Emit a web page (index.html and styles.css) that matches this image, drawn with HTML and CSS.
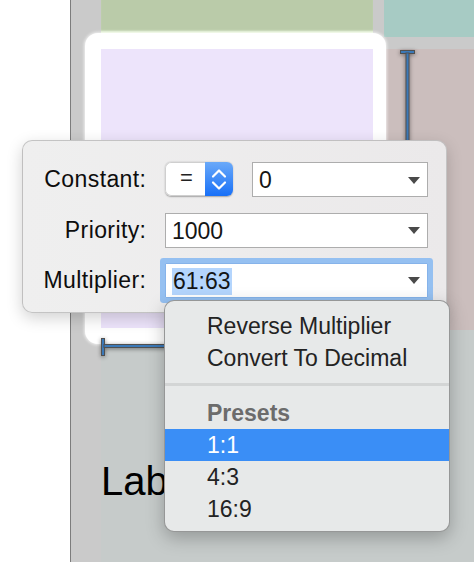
FILE: index.html
```html
<!DOCTYPE html>
<html>
<head>
<meta charset="utf-8">
<link rel="stylesheet" href="styles.css">
</head>
<body>
<div class="stage">
  <div class="canvas"></div>
  <div class="view green"></div>
  <div class="view teal"></div>
  <div class="view pink"></div>
  <div class="view bottom"></div>
  <div class="view frame"><div class="purple"></div></div>
  <div class="view label">Label</div>
  <svg class="ibeam-v" width="20" height="100" viewBox="0 0 20 100">
    <rect x="2.5" y="2.5" width="14" height="3" fill="#3b79b8" stroke="#505050" stroke-width="1"/>
    <rect x="8" y="5" width="3" height="95" fill="#3b79b8" stroke="#505050" stroke-width="1"/>
  </svg>
  <svg class="ibeam-h" width="80" height="22" viewBox="0 0 80 22">
    <rect x="2.5" y="2.5" width="3" height="17" fill="#3b79b8" stroke="#505050" stroke-width="1"/>
    <rect x="5" y="8.5" width="75" height="3" fill="#3b79b8" stroke="#505050" stroke-width="1"/>
  </svg>

  <div class="popover">
    <div class="lbl">Constant:</div>
    <div class="ctrl-row">
      <div class="stepper">
        <div class="seg-eq">=</div>
        <div class="seg-arrows">
          <svg width="28" height="33" viewBox="0 0 28 33">
            <path d="M8 13.5 L14 7.5 L20 13.5" fill="none" stroke="#fff" stroke-width="2.2" stroke-linecap="round" stroke-linejoin="round"/>
            <path d="M8 19.5 L14 25.5 L20 19.5" fill="none" stroke="#fff" stroke-width="2.2" stroke-linecap="round" stroke-linejoin="round"/>
          </svg>
        </div>
      </div>
      <div class="combo"><span class="val">0</span><span class="tri"></span></div>
    </div>
    <div class="lbl">Priority:</div>
    <div class="combo"><span class="val">1000</span><span class="tri"></span></div>
    <div class="lbl">Multiplier:</div>
    <div class="combo focus"><span class="val"><span class="sel">61:63</span></span><span class="tri"></span></div>
  </div>

  <div class="menu">
    <div class="item">Reverse Multiplier</div>
    <div class="item">Convert To Decimal</div>
    <div class="sep"></div>
    <div class="item head">Presets</div>
    <div class="item active">1:1</div>
    <div class="item">4:3</div>
    <div class="item">16:9</div>
  </div>
</div>
</body>
</html>
```

FILE: styles.css
```css
html, body {
  margin: 0;
  padding: 0;
  background: #ffffff;
}
body {
  font-family: "Liberation Sans", Arial, sans-serif;
  overflow: hidden;
}
.stage {
  position: relative;
  width: 474px;
  height: 562px;
  overflow: hidden;
}
.canvas {
  position: absolute;
  left: 70px;
  top: 0;
  right: 0;
  bottom: 0;
  background: #cacaca;
  border-left: 1px solid #7c7c7c;
}
.view {
  position: absolute;
}
.green {
  left: 101px;
  top: 0;
  width: 272px;
  height: 33px;
  background: #bacba9;
  box-shadow: inset 0 -3px 2px -1px #e3f2d3;
}
.teal {
  left: 384px;
  top: 0;
  width: 90px;
  height: 37px;
  background: #a7cbc4;
}
.pink {
  left: 385px;
  top: 49px;
  width: 89px;
  height: 281px;
  background: #cbbebd;
}
.bottom {
  left: 101px;
  top: 330px;
  width: 373px;
  height: 232px;
  background: #c6cbca;
}
.frame {
  left: 85px;
  top: 33px;
  width: 301px;
  height: 311px;
  box-sizing: border-box;
  padding: 16px 13px 16px 16px;
  background: #ffffff;
  border-radius: 13px;
  box-shadow: 0 0 3px 1px rgba(255, 255, 255, 0.7);
}
.purple {
  width: 100%;
  height: 100%;
  background: #ede4fb;
}
.label {
  left: 101px;
  top: 461px;
  font-size: 40px;
  line-height: 40px;
  color: #000;
}
.ibeam-v {
  position: absolute;
  left: 398px;
  top: 48px;
  filter: drop-shadow(0 1px 2px rgba(0, 0, 0, 0.45));
}
.ibeam-h {
  position: absolute;
  left: 99px;
  top: 336px;
  filter: drop-shadow(0 1px 2px rgba(0, 0, 0, 0.45));
}

.popover {
  position: absolute;
  left: 22px;
  top: 140px;
  width: 425px;
  height: 173px;
  box-sizing: border-box;
  padding: 21px 20px 0 20px;
  display: grid;
  grid-template-columns: 103px 263px;
  grid-auto-rows: 35px;
  column-gap: 19px;
  row-gap: 15.5px;
  background: linear-gradient(90deg, #efefef, #ebe9ea);
  border-radius: 10px;
  border: 0.5px solid rgba(0, 0, 0, 0.18);
  box-shadow: 0 5px 16px rgba(0, 0, 0, 0.18);
  font-size: 23px;
  color: #151515;
}
.lbl {
  display: flex;
  align-items: center;
  justify-content: flex-end;
  white-space: nowrap;
  letter-spacing: 0.4px;
  margin-right: -0.4px;
  color: #0d0d0d;
}
.ctrl-row {
  display: flex;
  gap: 19px;
  align-items: flex-start;
}
.stepper {
  display: flex;
  width: 68px;
  height: 34px;
  border-radius: 6px;
  overflow: hidden;
  box-shadow: 0 0.5px 1.5px rgba(0, 0, 0, 0.3);
  flex: none;
}
.seg-eq {
  width: 40px;
  display: flex;
  align-items: center;
  justify-content: center;
  background: #ffffff;
  border: 1px solid #cfcfcf;
  border-right: none;
  border-radius: 6px 0 0 6px;
  font-size: 22px;
  color: #222;
  padding: 0 0 2px 2px;
  box-sizing: border-box;
}
.seg-arrows {
  width: 28px;
  background: linear-gradient(180deg, #6aa9f9, #1870f7);
  display: flex;
  align-items: center;
}
.combo {
  flex: 1;
  height: 35px;
  box-sizing: border-box;
  border: 1px solid #adadad;
  background: #ffffff;
  display: flex;
  align-items: center;
  justify-content: space-between;
  padding: 2px 7px 0 6px;
}
.val {
  line-height: 27px;
}
.tri {
  width: 0;
  height: 0;
  border-left: 6.5px solid transparent;
  border-right: 6.5px solid transparent;
  border-top: 7px solid #4a4a4a;
  margin-top: -1px;
}
.combo.focus {
  border-color: #86b3ea;
  border-radius: 1px;
  box-shadow: 0 0 0 5px #95c0f1;
  padding-top: 1px;
}
.sel {
  background: #b4d5fd;
  display: inline-block;
  padding: 0 1px 0 1px;
  line-height: 27px;
}

.menu {
  position: absolute;
  left: 164px;
  top: 300px;
  width: 286px;
  height: 232px;
  box-sizing: border-box;
  padding: 9px 0 8px;
  background: #e7e9e9;
  border-radius: 10px;
  border: 0.5px solid rgba(0, 0, 0, 0.35);
  box-shadow: 0 6px 18px rgba(0, 0, 0, 0.25);
  font-size: 23px;
  color: #232323;
  overflow: hidden;
}
.item {
  height: 32px;
  line-height: 32px;
  padding-left: 42px;
  white-space: nowrap;
}
.item.head {
  font-weight: bold;
  color: #6c6c6c;
}
.item.active {
  background: #3a8ef6;
  color: #ffffff;
}
.sep {
  height: 3px;
  background: #d3d5d5;
  margin: 9px 0 11px;
}
```
